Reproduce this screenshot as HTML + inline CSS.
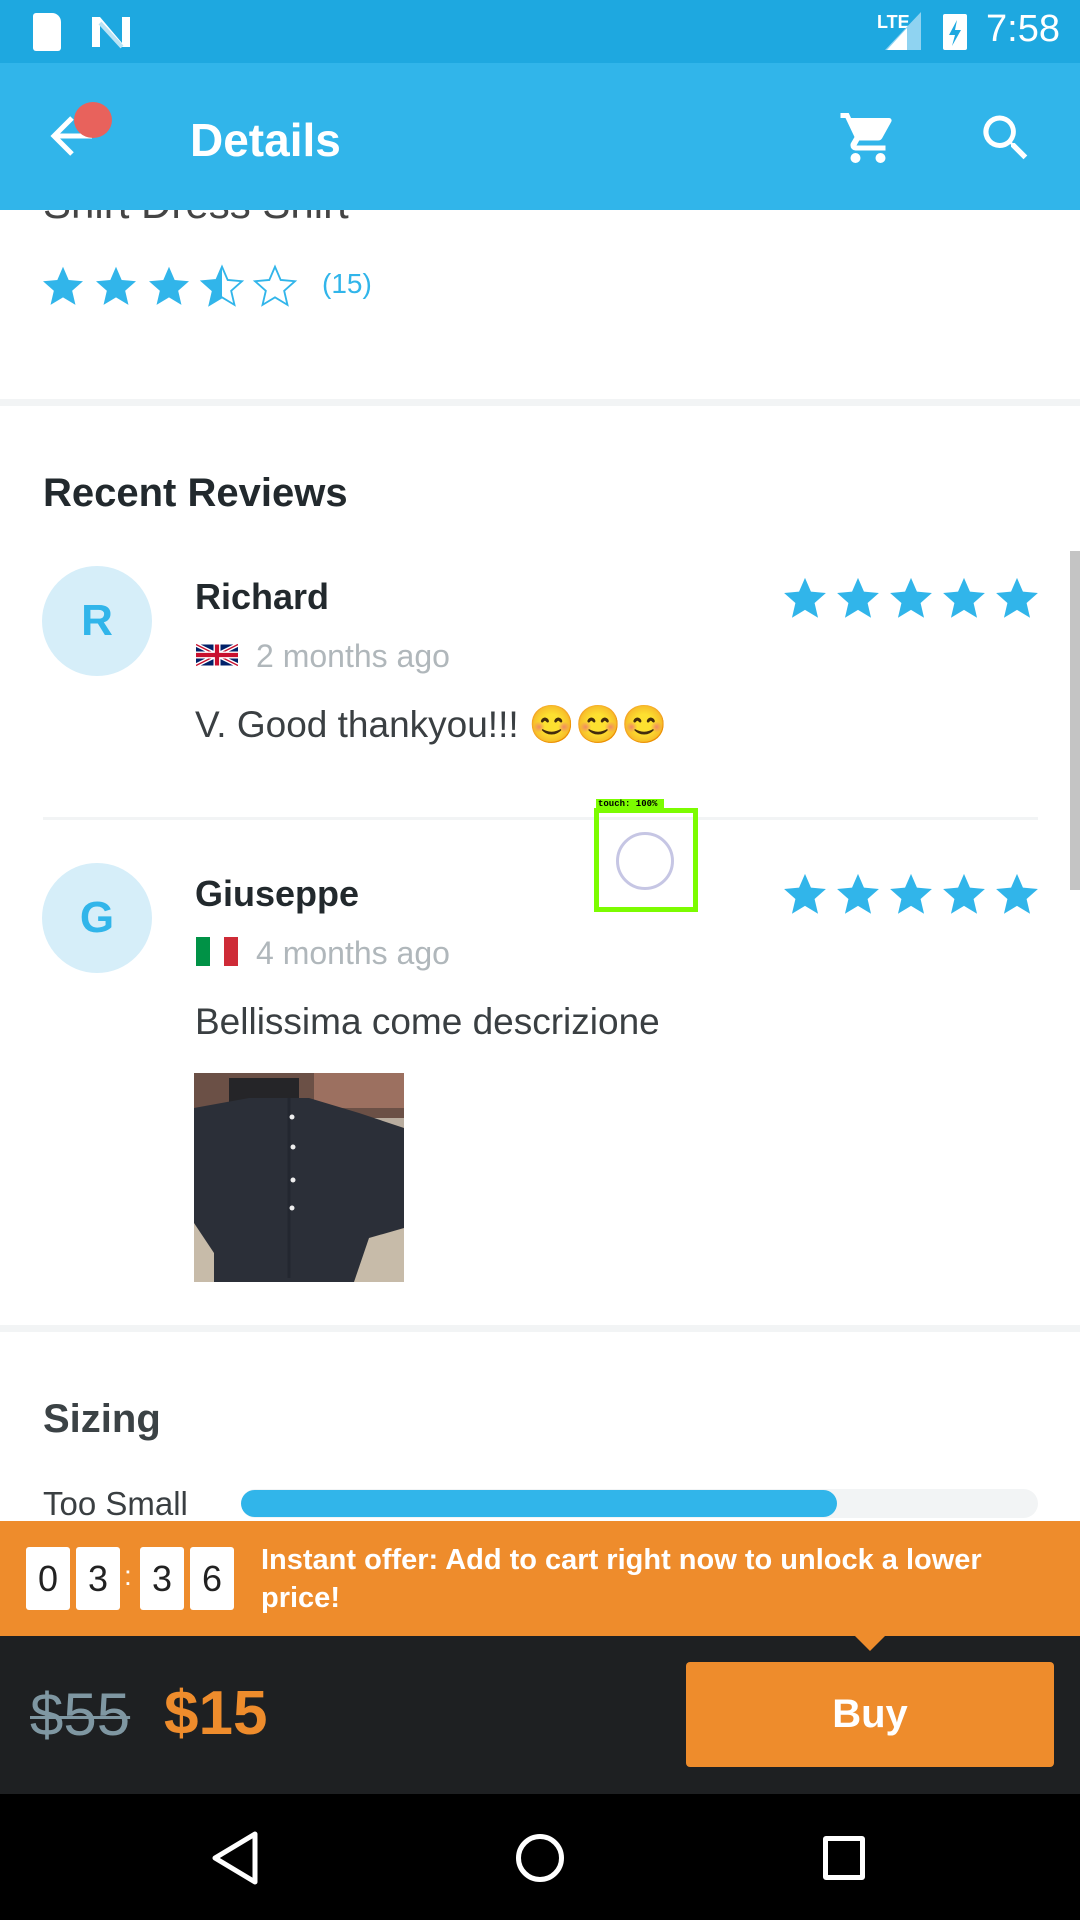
<!DOCTYPE html>
<html><head><meta charset="utf-8"><style>
*{margin:0;padding:0;box-sizing:border-box}
body{width:1080px;height:1920px;position:relative;overflow:hidden;background:#fff;font-family:"Liberation Sans",sans-serif}
.a{position:absolute}
.t{position:absolute;white-space:nowrap}
</style></head><body>
<svg width="0" height="0" style="position:absolute"><defs><symbol id="st" viewBox="0 0 24 24"><path d="M12 1.5l3.1 7.2 7.8.7-5.9 5.2 1.8 7.7L12 18.2l-6.8 4.1 1.8-7.7L1.1 9.4l7.8-.7z"/></symbol></defs></svg>
<!-- status bar -->
<div class="a" style="left:0;top:0;width:1080px;height:63px;background:#1ea8e0"></div>
<div class="a" style="left:33px;top:13px;width:28px;height:38px;background:#fff;border-radius:3px 9px 3px 3px"></div>
<svg class="a" style="left:90px;top:15px" width="42" height="34" viewBox="0 0 42 34"><path d="M2 2h8l22 26V2h8v30h-8L10 8v24H2z" fill="#fff"/><path d="M10 8l22 24" stroke="#b9e3f5" stroke-width="4"/></svg>
<div class="t" style="left:877px;top:12px;font-size:18px;color:#fff;font-weight:bold">LTE</div>
<svg class="a" style="left:885px;top:12px" width="36" height="38"><path d="M36 0v38H0z" fill="#8fd3f1"/><path d="M22 16v22H2z" fill="#fff"/></svg>
<div class="a" style="left:943px;top:14px;width:24px;height:36px;background:#fff;border-radius:2px"></div>
<svg class="a" style="left:943px;top:18px" width="24" height="30"><path d="M14 2L6 17h6l-3 11 9-16h-6z" fill="#1ea8e0"/></svg>
<div class="t" style="left:986px;top:8px;font-size:38px;color:#fff">7:58</div>
<!-- app bar -->
<div class="a" style="left:0;top:63px;width:1080px;height:147px;background:#31b5ea"></div>
<svg class="a" style="left:48px;top:112px" width="50" height="50"><path d="M44 24H8M24 6L6 24l18 18" stroke="#fff" stroke-width="5" fill="none"/></svg>
<div class="a" style="left:74px;top:102px;width:38px;height:36px;border-radius:50%;background:#e8625c"></div>
<div class="t" style="left:190px;top:113px;font-size:46px;color:#fff;font-weight:bold">Details</div>
<svg class="a" style="left:838px;top:108px" width="60" height="60" viewBox="0 0 24 24"><path d="M7 18a2 2 0 100 4 2 2 0 000-4zM1 2v2h2l3.6 7.6-1.4 2.4C5 14.3 5 14.6 5 15a2 2 0 002 2h12v-2H7.4l1.1-2h7.5c.8 0 1.4-.4 1.7-1l3.6-6.5A1 1 0 0020.4 4H5.2l-.9-2zm16 16a2 2 0 100 4 2 2 0 000-4z" fill="#fff"/></svg>
<svg class="a" style="left:976px;top:108px" width="60" height="60" viewBox="0 0 24 24"><path d="M15.5 14h-.8l-.3-.3A6.5 6.5 0 109.5 16c1.6 0 3.1-.6 4.2-1.6l.3.3v.8l5 5 1.5-1.5zm-6 0A4.5 4.5 0 1114 9.5 4.5 4.5 0 019.5 14z" fill="#fff"/></svg>
<!-- partial title -->
<div class="a" style="left:0;top:210px;width:1080px;height:14px;overflow:hidden"><div class="t" style="left:43px;top:-30px;font-size:42px;color:#444">Shirt Dress Shirt</div></div>
<!-- rating -->
<svg class="a" style="left:41px;top:264px" width="260" height="46" viewBox="0 0 260 46">
<g fill="#31b5ea"><use href="#st" x="0" y="0" width="44" height="44"/><use href="#st" x="53" y="0" width="44" height="44"/><use href="#st" x="106" y="0" width="44" height="44"/></g>
<g transform="translate(159,0) scale(1.8333)"><path d="M12 1.5V18.2l-6.8 4.1 1.8-7.7L1.1 9.4l7.8-.7z" fill="#31b5ea"/><path d="M12 1.5l3.1 7.2 7.8.7-5.9 5.2 1.8 7.7L12 18.2l-6.8 4.1 1.8-7.7L1.1 9.4l7.8-.7z" fill="none" stroke="#31b5ea" stroke-width="1"/></g>
<g transform="translate(212,0) scale(1.8333)"><path d="M12 1.5l3.1 7.2 7.8.7-5.9 5.2 1.8 7.7L12 18.2l-6.8 4.1 1.8-7.7L1.1 9.4l7.8-.7z" fill="none" stroke="#31b5ea" stroke-width="1"/></g>
</svg>
<div class="t" style="left:322px;top:268px;font-size:28px;color:#31b5ea">(15)</div>
<div class="a" style="left:0;top:399px;width:1080px;height:7px;background:#f2f4f5"></div>
<div class="t" style="left:43px;top:471px;font-size:40px;font-weight:bold;color:#22292d">Recent Reviews</div>
<!-- review 1 -->
<div class="a" style="left:42px;top:566px;width:110px;height:110px;border-radius:50%;background:#d6eef9;color:#31b5ea;font-size:44px;font-weight:bold;text-align:center;line-height:110px">R</div>
<div class="t" style="left:195px;top:576px;font-size:36px;font-weight:bold;color:#22292d">Richard</div>
<svg class="a" style="left:196px;top:640px" width="42" height="30" viewBox="0 0 60 30"><rect width="60" height="30" fill="#012169"/><path d="M0 0l60 30M60 0L0 30" stroke="#fff" stroke-width="6"/><path d="M0 0l60 30M60 0L0 30" stroke="#c8102e" stroke-width="2"/><path d="M30 0v30M0 15h60" stroke="#fff" stroke-width="10"/><path d="M30 0v30M0 15h60" stroke="#c8102e" stroke-width="6"/></svg>
<div class="t" style="left:256px;top:638px;font-size:32px;color:#b0b7bb">2 months ago</div>
<div class="t" style="left:195px;top:704px;font-size:37px;color:#3a3f42">V. Good thankyou!!! <span style="font-family:'Noto Color Emoji','DejaVu Sans',sans-serif">😊😊😊</span></div>
<svg class="a" style="left:782px;top:575px" width="260" height="46"><g fill="#31b5ea"><use href="#st" x="0" width="46" height="46"/><use href="#st" x="53" width="46" height="46"/><use href="#st" x="106" width="46" height="46"/><use href="#st" x="159" width="46" height="46"/><use href="#st" x="212" width="46" height="46"/></g></svg>
<div class="a" style="left:43px;top:817px;width:995px;height:3px;background:#f2f4f5"></div>
<!-- review 2 -->
<div class="a" style="left:42px;top:863px;width:110px;height:110px;border-radius:50%;background:#d6eef9;color:#31b5ea;font-size:44px;font-weight:bold;text-align:center;line-height:110px">G</div>
<div class="t" style="left:195px;top:873px;font-size:36px;font-weight:bold;color:#22292d">Giuseppe</div>
<div class="a" style="left:196px;top:937px;width:42px;height:29px;background:linear-gradient(90deg,#009246 33%,#fff 33%,#fff 67%,#ce2b37 67%)"></div>
<div class="t" style="left:256px;top:935px;font-size:32px;color:#b0b7bb">4 months ago</div>
<div class="t" style="left:195px;top:1001px;font-size:37px;color:#3a3f42">Bellissima come descrizione</div>
<svg class="a" style="left:782px;top:871px" width="260" height="46"><g fill="#31b5ea"><use href="#st" x="0" width="46" height="46"/><use href="#st" x="53" width="46" height="46"/><use href="#st" x="106" width="46" height="46"/><use href="#st" x="159" width="46" height="46"/><use href="#st" x="212" width="46" height="46"/></g></svg>
<svg class="a" style="left:194px;top:1073px" width="210" height="209" viewBox="0 0 210 209">
<rect width="210" height="209" fill="#b9ad9f"/><rect width="210" height="45" fill="#6b5046"/><rect x="35" y="5" width="70" height="30" fill="#252528"/><rect x="120" y="0" width="90" height="35" fill="#9c7060"/>
<path d="M0 35l55-10h60l50 15 45 15v125l-25 5-20 24H15L0 180z" fill="#2b2f38"/><path d="M0 150l20 30v29H0z" fill="#c7bba9"/><path d="M175 165l35-10v54h-50z" fill="#c7bba9"/>
<path d="M95 25v180" stroke="#232730" stroke-width="3"/>
<circle cx="98" cy="44" r="2.5" fill="#eee"/><circle cx="99" cy="74" r="2.5" fill="#eee"/><circle cx="99" cy="107" r="2.5" fill="#eee"/><circle cx="98" cy="135" r="2.5" fill="#eee"/></svg>
<div class="a" style="left:0;top:1325px;width:1080px;height:7px;background:#f2f4f5"></div>
<div class="t" style="left:43px;top:1397px;font-size:40px;font-weight:bold;color:#3b4245">Sizing</div>
<div class="t" style="left:43px;top:1485px;font-size:33px;color:#3a3f42">Too Small</div>
<div class="a" style="left:241px;top:1489px;width:797px;height:29px;border-radius:15px;background:#f2f4f5"></div>
<div class="a" style="left:241px;top:1490px;width:596px;height:27px;border-radius:14px;background:#31b5ea"></div>
<!-- scrollbar -->
<div class="a" style="left:1070px;top:551px;width:10px;height:339px;background:#c4c4c4"></div>
<!-- touch -->
<div class="a" style="left:596px;top:799px;width:68px;height:11px;background:#7cfc00;font:bold 9px 'Liberation Mono',monospace;color:#000;line-height:11px;padding-left:2px">touch: 100%</div>
<div class="a" style="left:594px;top:808px;width:104px;height:104px;border:5px solid #7cfc00"></div>
<div class="a" style="left:616px;top:832px;width:58px;height:58px;border-radius:50%;border:3px solid #c6c6e4"></div>
<!-- offer banner -->
<div class="a" style="left:0;top:1521px;width:1080px;height:115px;background:#ee8c2c"></div>
<div class="a" style="left:26px;top:1547px;width:44px;height:63px;background:#fff;border-radius:3px;font-size:36px;text-align:center;line-height:63px;color:#222">0</div>
<div class="a" style="left:76px;top:1547px;width:44px;height:63px;background:#fff;border-radius:3px;font-size:36px;text-align:center;line-height:63px;color:#222">3</div>
<div class="t" style="left:124px;top:1560px;font-size:28px;color:#fff">:</div>
<div class="a" style="left:140px;top:1547px;width:44px;height:63px;background:#fff;border-radius:3px;font-size:36px;text-align:center;line-height:63px;color:#222">3</div>
<div class="a" style="left:190px;top:1547px;width:44px;height:63px;background:#fff;border-radius:3px;font-size:36px;text-align:center;line-height:63px;color:#222">6</div>
<div class="a" style="left:261px;top:1541px;width:800px;font-size:29px;font-weight:bold;color:#fff;line-height:38px">Instant offer: Add to cart right now to unlock a lower price!</div>
<!-- buy bar -->
<div class="a" style="left:0;top:1636px;width:1080px;height:158px;background:#1e2022"></div>
<svg class="a" style="left:855px;top:1636px" width="30" height="16"><path d="M0 0h30L15 15z" fill="#ee8c2c"/></svg>
<div class="t" style="left:30px;top:1680px;font-size:60px;color:#7f97a2;text-decoration:line-through;text-decoration-thickness:3px">$55</div>
<div class="t" style="left:164px;top:1678px;font-size:62px;font-weight:bold;color:#ee8c2c">$15</div>
<div class="a" style="left:686px;top:1662px;width:368px;height:105px;border-radius:4px;background:#ee8c2c;color:#fff;font-size:40px;font-weight:bold;text-align:center;line-height:105px">Buy</div>
<!-- nav -->
<div class="a" style="left:0;top:1794px;width:1080px;height:126px;background:#000"></div>
<svg class="a" style="left:210px;top:1830px" width="50" height="56"><path d="M45 4v48L5 28z" fill="none" stroke="#fff" stroke-width="5" stroke-linejoin="round"/></svg>
<div class="a" style="left:516px;top:1834px;width:48px;height:48px;border-radius:50%;border:5px solid #fff"></div>
<div class="a" style="left:823px;top:1836px;width:42px;height:44px;border:5px solid #fff;border-radius:3px"></div>
</body></html>
